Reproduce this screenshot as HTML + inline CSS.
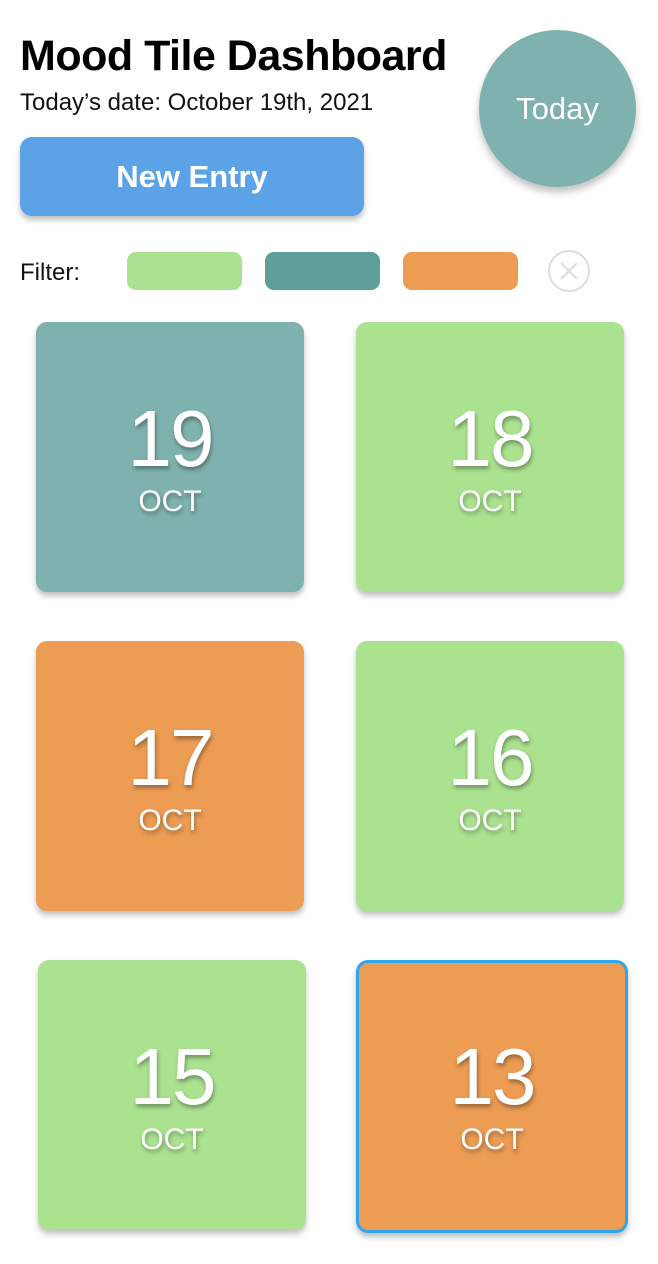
<!DOCTYPE html>
<html><head><meta charset="utf-8"><style>
*{margin:0;padding:0;box-sizing:border-box}
body{width:658px;height:1264px;background:#fff;font-family:"Liberation Sans",sans-serif;position:relative;overflow:hidden}
.abs{position:absolute}
h1{position:absolute;left:20px;top:32px;font-size:43px;font-weight:bold;letter-spacing:-0.5px;color:#000}
.date{left:20px;top:89px;font-size:24px;color:#111}
.btn{left:20px;top:137px;width:344px;height:79px;background:#5ba3e6;border-radius:12px;box-shadow:0 4px 6px rgba(0,0,0,.25);color:#fff;font-weight:bold;font-size:31px;text-align:center;line-height:79px}
.circ{left:479px;top:30px;width:157px;height:157px;border-radius:50%;background:#7fb2ae;box-shadow:0 5px 8px rgba(0,0,0,.25);color:#fff;font-size:31px;text-align:center;line-height:157px}
.filt{left:20px;top:259px;font-size:24px;color:#111}
.pill{top:252px;width:115px;height:38px;border-radius:9px}
.tile{width:268px;height:270px;border-radius:11px;box-shadow:0 4px 6px rgba(0,0,0,.25);color:#fff;text-align:center}
.tile .n{position:absolute;left:0;right:0;top:72px;font-size:80px;letter-spacing:-2px;line-height:90px;text-shadow:1px 3px 4px rgba(0,0,0,.35)}
.tile .m{position:absolute;left:0;right:0;top:162px;font-size:30px;line-height:36px;text-shadow:1px 3px 4px rgba(0,0,0,.35)}
.t{background:#7fb2ae}.g{background:#abe290}.o{background:#ec9c53}
</style></head><body>
<h1>Mood Tile Dashboard</h1>
<div class="abs date">Today’s date: October 19th, 2021</div>
<div class="abs btn">New Entry</div>
<div class="abs circ">Today</div>
<div class="abs filt">Filter:</div>
<div class="abs pill" style="left:127px;background:#abe290"></div>
<div class="abs pill" style="left:265px;background:#5e9f9a"></div>
<div class="abs pill" style="left:403px;background:#ec9c53"></div>
<svg class="abs" style="left:547px;top:249px" width="44" height="44" viewBox="0 0 44 44"><circle cx="22" cy="22" r="20" fill="none" stroke="#ddd" stroke-width="2"/><path d="M14 14L30 30M30 14L14 30" stroke="#ddd" stroke-width="2"/></svg>
<div class="abs tile t" style="left:36px;top:322px"><div class="n">19</div><div class="m">OCT</div></div>
<div class="abs tile g" style="left:356px;top:322px"><div class="n">18</div><div class="m">OCT</div></div>
<div class="abs tile o" style="left:36px;top:641px"><div class="n">17</div><div class="m">OCT</div></div>
<div class="abs tile g" style="left:356px;top:641px"><div class="n">16</div><div class="m">OCT</div></div>
<div class="abs tile g" style="left:38px;top:960px"><div class="n">15</div><div class="m">OCT</div></div>
<div class="abs tile o" style="left:356px;top:960px;width:272px;height:273px;border:3px solid #2ea5ef;border-radius:12px"><div class="n" style="top:69px">13</div><div class="m" style="top:159px">OCT</div></div>
</body></html>
